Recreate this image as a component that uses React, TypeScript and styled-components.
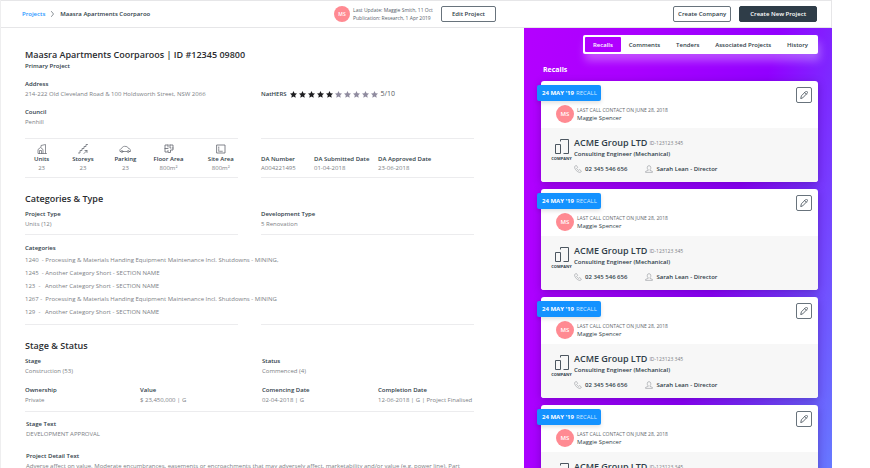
import React from "react";
import styled, { createGlobalStyle } from "styled-components";

const GlobalStyle = createGlobalStyle`
  *, *::before, *::after { box-sizing: border-box; }
  body {
    margin: 0;
    background: #fff;
    font-family: "Open Sans", "Noto Sans", sans-serif;
    font-size: 6px;
    color: #2f3d48;
  }
  h1, h2, h3, p, ul, dl, dd, dt { margin: 0; padding: 0; }
  button { font-family: inherit; cursor: pointer; }
  svg { display: block; }
`;

const ink = "#2f3d48";
const muted = "#7c8085";
const line = "#ececee";

const Page = styled.div`
  display: grid;
  grid-template-rows: auto minmax(0, 1fr);
  height: 100vh;
  margin-right: 38px;
  border-left: 1px solid #eeeeef;
`;

const Header = styled.header`
  display: grid;
  grid-template-columns: minmax(0, 1fr) 308px;
  height: 28px;
  border: 1px solid #e6e6e8;
  border-left: 0;
`;

const HeaderLeft = styled.div`
  display: flex;
  align-items: center;
  justify-content: space-between;
  padding: 0 27px 0 21px;
`;

const HeaderRight = styled.div`
  display: flex;
  align-items: center;
  justify-content: flex-end;
  gap: 8px;
  padding-right: 14px;
`;

const Breadcrumb = styled.nav`
  display: flex;
  align-items: center;
  gap: 6px;
  font-size: 6px;
  line-height: 10px;
  font-weight: 600;

  a { color: #1f96ff; text-decoration: none; }
`;

const UpdateInfo = styled.div`
  display: flex;
  align-items: center;
  gap: 3px;
  font-size: 5px;
  line-height: 8px;
  color: #56616b;
`;

const UpdateActions = styled.div`
  display: flex;
  align-items: center;
  gap: 8px;
`;

const Avatar = styled.span<{ $size: number }>`
  display: flex;
  flex: none;
  align-items: center;
  justify-content: center;
  width: ${(p) => p.$size}px;
  height: ${(p) => p.$size}px;
  border-radius: 50%;
  background: #ff8a92;
  color: #fff;
  font-size: ${(p) => (p.$size > 16 ? 6 : 5)}px;
  font-weight: 600;
`;

const Button = styled.button<{ $solid?: boolean; $wide?: boolean }>`
  height: 16px;
  padding: 0 ${(p) => (p.$wide ? 10 : 4)}px;
  border: 1px solid ${(p) => (p.$solid ? ink : "#68737c")};
  border-radius: 2px;
  background: ${(p) => (p.$solid ? ink : "#fff")};
  color: ${(p) => (p.$solid ? "#fff" : ink)};
  font-size: 6px;
  line-height: 10px;
  font-weight: 600;
  white-space: nowrap;
`;

const Body = styled.div`
  display: grid;
  grid-template-columns: minmax(0, 1fr) 308px;
  min-height: 0;
`;

const Main = styled.main`
  min-height: 0;
  overflow: auto;
  scrollbar-width: none;
  padding: 21px 50px 10px 24px;
`;

const Title = styled.h1`
  font-size: 9px;
  line-height: 12px;
  font-weight: 600;
  color: #2a2c2f;
`;

const Subtitle = styled.p`
  font-size: 6px;
  line-height: 10px;
  font-weight: 600;
`;

const SectionTitle = styled.h2`
  margin: 15px 0 4px;
  font-size: 9px;
  line-height: 12px;
  font-weight: 600;
  color: #2a2c2f;
`;

const Columns = styled.div<{ $top?: number }>`
  display: grid;
  grid-template-columns: minmax(0, 1fr) minmax(0, 1fr);
  column-gap: 23px;
  margin-top: ${(p) => p.$top ?? 0}px;
`;

const Ruled = styled.div<{ $pad: number }>`
  padding-bottom: ${(p) => p.$pad}px;
  border-bottom: 1px solid ${line};
`;

const Stack = styled.div`
  display: flex;
  flex-direction: column;
  gap: 8px;
`;

const FieldBox = styled.dl`
  white-space: nowrap;

  dt { font-size: 6px; line-height: 10px; font-weight: 600; }
  dd { font-size: 6px; line-height: 10px; color: ${muted}; }
`;

const Rating = styled.div`
  display: flex;
  align-items: center;
  align-self: start;
  gap: 3px;
  margin-top: 10px;
  font-size: 6px;
  line-height: 10px;
  font-weight: 600;
`;

const Stars = styled.span`
  display: flex;
  gap: 2px;
`;

const Score = styled.span`
  font-size: 7px;
  font-weight: 400;
  color: #55585d;
`;

const StatBand = styled.div<{ $cols: string; $left?: number }>`
  display: grid;
  grid-template-columns: ${(p) => p.$cols};
  align-items: end;
  padding: 5px 0 4px ${(p) => p.$left ?? 0}px;
  border: solid ${line};
  border-width: 1px 0;
`;

const Stat = styled.div`
  display: flex;
  flex-direction: column;
  align-items: center;
  justify-self: start;
  white-space: nowrap;
  line-height: 9px;
  color: ${muted};

  strong { font-weight: 600; line-height: 10px; color: ${ink}; }
`;

const DaStat = styled(Stat)`
  align-items: flex-start;
`;

const CategoryList = styled.ul`
  list-style: none;
  margin-top: 1px;
  font-size: 6px;
  line-height: 13px;
  color: ${muted};
  white-space: pre;
`;

const Label = styled.h3`
  font-size: 6px;
  line-height: 10px;
  font-weight: 600;
`;

const StageGrid = styled.div`
  display: grid;
  grid-template-columns: 115fr 122fr 116fr 96fr;
  row-gap: 9px;
`;

const Wide = styled.div`
  grid-column: span 2;
`;

const TextBlocks = styled.div`
  display: flex;
  flex-direction: column;
  gap: 12px;
  padding: 7px 0 0 1px;
`;

const Panel = styled.aside`
  min-height: 0;
  overflow: auto;
  scrollbar-width: none;
  padding: 7px 14px 0 17px;
  background: linear-gradient(105deg, #b400ff 0%, #a900ff 28%, #9200ff 60%, #7c2cff 76%, #667aff 100%);
`;

const Tabs = styled.nav`
  display: flex;
  height: 19px;
  margin-left: 42px;
  padding: 2px;
  border-radius: 2px;
  background: #fff;
  box-shadow: 2px 7px 8px rgba(255, 255, 255, 0.3);
`;

const Tab = styled.button<{ $active?: boolean }>`
  flex: 1 1 auto;
  padding: 0 7px;
  border: 0;
  border-radius: 1px;
  background: ${(p) => (p.$active ? "#b000ff" : "transparent")};
  color: ${(p) => (p.$active ? "#fff" : ink)};
  font-size: 6px;
  line-height: 10px;
  font-weight: 600;
  white-space: nowrap;
`;

const PanelTitle = styled.h2`
  margin: 11px 0 6px 2px;
  font-size: 7px;
  line-height: 10px;
  font-weight: 700;
  color: #fff;
`;

const CardList = styled.div`
  display: flex;
  flex-direction: column;
  gap: 7px;
`;

const Card = styled.article`
  position: relative;
  border-radius: 3px;
  background: #fff;
  box-shadow: 0 2px 8px rgba(30, 0, 80, 0.3);
`;

const Badge = styled.div`
  position: absolute;
  top: 4px;
  left: -4px;
  display: flex;
  align-items: center;
  gap: 2px;
  height: 16px;
  padding: 0 4px 0 5px;
  border-radius: 2px;
  background: #1492ff;
  color: #d3e9ff;
  font-size: 6px;
  line-height: 10px;
  font-weight: 400;
  box-shadow: 0 2px 4px rgba(0, 0, 0, 0.12);

  strong { color: #fff; font-weight: 700; }
`;

const CardTop = styled.div`
  display: flex;
  justify-content: space-between;
  height: 47px;
  padding: 6px 6px 5px 15px;
`;

const Contact = styled.div`
  display: flex;
  align-items: center;
  align-self: flex-end;
  gap: 3px;
  font-size: 6px;
  line-height: 9px;
  font-weight: 500;

  small {
    display: block;
    font-size: 5px;
    line-height: 8px;
    color: #62676d;
  }
`;

const EditButton = styled.button`
  display: flex;
  align-items: center;
  justify-content: center;
  width: 16px;
  height: 16px;
  padding: 0;
  border: 1px solid #68737c;
  border-radius: 2px;
  background: #fff;
`;

const CardBottom = styled.div`
  display: flex;
  gap: 2px;
  height: 54px;
  padding: 9px 10px 8px;
  border-radius: 0 0 3px 3px;
  background: #f7f7f7;
`;

const CompanyMark = styled.div`
  display: flex;
  flex-direction: column;
  align-items: center;
  flex: none;
  width: 21px;
  padding-top: 1px;
  font-size: 4px;
  line-height: 8px;
  font-weight: 700;
`;

const CompanyName = styled.h3`
  display: flex;
  align-items: center;
  gap: 2px;
  font-size: 9px;
  line-height: 12px;
  font-weight: 600;

  small { font-size: 5px; font-weight: 400; color: ${muted}; }
`;

const Role = styled.p`
  font-size: 6px;
  line-height: 10px;
  font-weight: 600;
`;

const Reach = styled.div`
  display: flex;
  gap: 18px;
  margin-top: 5px;
  font-size: 6px;
  line-height: 10px;
  font-weight: 600;

  span { display: flex; align-items: center; gap: 3px; }
`;

const LineIcon = ({ children, w = 10, h = 10, box, color = "#62666f", sw = 1 }: {
  children: React.ReactNode; w?: number; h?: number; box?: string; color?: string; sw?: number;
}) => (
  <svg width={w} height={h} viewBox={box ?? "0 0 20 20"} fill="none" stroke={color} strokeWidth={sw}
    strokeLinecap="round" strokeLinejoin="round" aria-hidden="true">{children}</svg>
);

const UnitsIcon = () => (
  <LineIcon sw={1.4}>
    <path d="M8 6V3l9-2v18H2v-8l5-4 5 4v8M5 19v-6h4v6M17 19h2" />
  </LineIcon>
);
const StoreysIcon = () => (
  <LineIcon sw={1.5}>
    <path d="M1 18h3v-5h4V9h4V5h4V1h3M12 19l6-6M14 13h4v4" />
  </LineIcon>
);
const ParkingIcon = () => (
  <LineIcon w={12} box="0 0 24 20" sw={1.4}>
    <path d="M4 15H2c-1-3 0-5 3-6 2-4 5-5 9-4 3 0 4 2 5 4 3 0 4 2 4 6h-2M8 15h8" />
    <circle cx="6" cy="15" r="2" /><circle cx="18.500" cy="15" r="2" />
  </LineIcon>
);
const FloorIcon = () => (
  <LineIcon sw={1.6}>
    <path d="M8 2H2v14h6v-3M8 2v4M2 9h6M12 2h6v10h-5v5H9M12 2v6h2M18 8h-1" />
  </LineIcon>
);
const SiteIcon = () => (
  <LineIcon sw={1.6}>
    <path d="M2 2h16v16H2z" /><path d="M5.500 6v8.500H14" strokeDasharray="1.500 2" />
  </LineIcon>
);

const Star = ({ on }: { on: boolean }) => (
  <svg width="7" height="7" viewBox="0 0 20 20" fill={on ? "#1d1d20" : "#8f8b9f"} aria-hidden="true">
    <path d="M10 0l3 6.400 7 .9-5.100 4.800 1.300 7L10 15.700l-6.200 3.400 1.300-7L0 7.300l7-.9z" />
  </svg>
);

const Field = ({ label, value }: { label: string; value: string }) => (
  <FieldBox><dt>{label}</dt><dd>{value}</dd></FieldBox>
);

const stats = [
  { icon: <UnitsIcon />, label: "Units", value: "23" },
  { icon: <StoreysIcon />, label: "Storeys", value: "23" },
  { icon: <ParkingIcon />, label: "Parking", value: "23" },
  { icon: <FloorIcon />, label: "Floor Area", value: "800m²" },
  { icon: <SiteIcon />, label: "Site Area", value: "800m²" },
];

const daStats = [
  ["DA Number", "A004221495"],
  ["DA Submitted Date", "01-04-2018"],
  ["DA Approved Date", "23-06-2018"],
];

const categories = [
  "1240  - Processing & Materials Handing Equipment Maintenance Incl. Shutdowns - MINING,",
  "1245  - Another Category Short - SECTION NAME",
  "123  -   Another Category Short - SECTION NAME",
  "1267 -  Processing & Materials Handing Equipment Maintenance Incl. Shutdowns - MINING",
  "129  -   Another Category Short - SECTION NAME",
];

const tabs = ["Recalls", "Comments", "Tenders", "Associated Projects", "History"];

const RecallCard = () => (
  <Card>
    <CardTop>
      <Contact>
        <Avatar $size={18}>MS</Avatar>
        <div><small>LAST CALL CONTACT ON JUNE 28, 2018</small>Maggie Spencer</div>
      </Contact>
      <EditButton aria-label="Edit recall">
        <LineIcon w={8} h={8} color="#3c4852" sw={2}>
          <path d="M2 18l1.500-6L14 1.500a2.500 2.500 0 0 1 4 4L7.500 16.500zM12 4l4 4" />
        </LineIcon>
      </EditButton>
    </CardTop>
    <CardBottom>
      <CompanyMark>
        <LineIcon w={16} h={17} box="0 0 16 17" color="#4c5660">
          <path d="M1.500 6.500h5v9h-5zM6.500 3.500v-2h8v14h-5" strokeLinecap="butt" strokeLinejoin="miter" />
        </LineIcon>
        COMPANY
      </CompanyMark>
      <div>
        <CompanyName>ACME Group LTD <small>ID-123123 345</small></CompanyName>
        <Role>Consulting Engineer (Mechanical)</Role>
        <Reach>
          <span>
            <LineIcon w={8} h={8} color="#8d9196" sw={1.4}>
              <path d="M5 1.500L1.500 4C1 11 9 19 16 18.500l2.500-3.500-4.500-3.500-2.500 2C9 12 7.500 10.500 6.500 8.500l2-2z" />
            </LineIcon>
            02 345 546 656
          </span>
          <span>
            <LineIcon w={8} h={8} color="#8d9196" sw={1.4}>
              <path d="M7.500 12C4 9 5 1.500 10 1.500S16 9 12.500 12v1.500l6 2.500v2.500h-17V16l6-2.500z" />
            </LineIcon>
            Sarah Lean - Director
          </span>
        </Reach>
      </div>
    </CardBottom>
    <Badge><strong>24 MAY '19</strong>RECALL</Badge>
  </Card>
);

export default function App() {
  return (
    <>
      <GlobalStyle />
      <Page>
        <Header>
          <HeaderLeft>
            <Breadcrumb aria-label="Breadcrumb">
              <a href="#projects">Projects</a>
              <LineIcon w={3} h={6} box="0 0 3 6" color="#8b9197"><path d="M.5.5L2.500 3 .5 5.500" /></LineIcon>
              <span>Maasra Apartments Coorparoo</span>
            </Breadcrumb>
            <UpdateActions>
              <UpdateInfo>
                <Avatar $size={16}>MS</Avatar>
                <div>
                  <p>Last Update: Maggie Smith, 11 Oct</p>
                  <p>Publication: Research, 1 Apr 2019</p>
                </div>
              </UpdateInfo>
              <Button $wide>Edit Project</Button>
            </UpdateActions>
          </HeaderLeft>
          <HeaderRight>
            <Button>Create Company</Button>
            <Button $solid $wide>Create New Project</Button>
          </HeaderRight>
        </Header>
        <Body>
          <Main>
            <Title>Maasra Apartments Coorparoos | ID #12345 09800</Title>
            <Subtitle>Primary Project</Subtitle>
            <Columns $top={8}>
              <Stack>
                <Field label="Address" value="214-222 Old Cleveland Road & 100 Holdsworth Street, NSW 2066" />
                <Field label="Council" value="Penhill" />
              </Stack>
              <Rating>
                NatHERS
                <Stars role="img" aria-label="5 out of 10 stars">
                  {Array.from({ length: 10 }, (_, i) => <Star key={i} on={i < 5} />)}
                </Stars>
                <Score>5/10</Score>
              </Rating>
            </Columns>
            <Columns $top={11}>
              <StatBand $cols="38fr 42fr 39fr 54fr 30fr" $left={9}>
                {stats.map((s) => (
                  <Stat key={s.label}>{s.icon}<strong>{s.label}</strong><span>{s.value}</span></Stat>
                ))}
              </StatBand>
              <StatBand $cols="53fr 64fr 96fr">
                {daStats.map(([label, value]) => (
                  <DaStat key={label}><strong>{label}</strong><span>{value}</span></DaStat>
                ))}
              </StatBand>
            </Columns>

            <SectionTitle>Categories &amp; Type</SectionTitle>
            <Columns>
              <Ruled $pad={5}><Field label="Project Type" value="Units (12)" /></Ruled>
              <Ruled $pad={5}><Field label="Development Type" value="5 Renovation" /></Ruled>
            </Columns>
            <Columns $top={8}>
              <Ruled $pad={5}>
                <Label>Categories</Label>
                <CategoryList>{categories.map((c) => <li key={c}>{c}</li>)}</CategoryList>
              </Ruled>
              <Ruled $pad={5} />
            </Columns>

            <SectionTitle>Stage &amp; Status</SectionTitle>
            <Ruled $pad={6}>
              <StageGrid>
                <Wide><Field label="Stage" value="Construction (53)" /></Wide>
                <Wide><Field label="Status" value="Commenced (4)" /></Wide>
                <Field label="Ownership" value="Private" />
                <Field label="Value" value="$ 23,450,000 | G" />
                <Field label="Comencing Date" value="02-04-2018 | G" />
                <Field label="Completion Date" value="12-06-2018 | G | Project Finalised" />
              </StageGrid>
            </Ruled>
            <TextBlocks>
              <Field label="Stage Text" value="DEVELOPMENT APPROVAL" />
              <Field
                label="Project Detail Text"
                value="Adverse affect on value. Moderate encumbrances, easements or encroachments that may adversely affect, marketability and/or value (e.g. power line). Part"
              />
            </TextBlocks>
          </Main>
          <Panel>
            <Tabs aria-label="Project activity">
              {tabs.map((t, i) => <Tab key={t} $active={i === 0}>{t}</Tab>)}
            </Tabs>
            <PanelTitle>Recalls</PanelTitle>
            <CardList>
              {[0, 1, 2, 3].map((n) => <RecallCard key={n} />)}
            </CardList>
          </Panel>
        </Body>
      </Page>
    </>
  );
}
